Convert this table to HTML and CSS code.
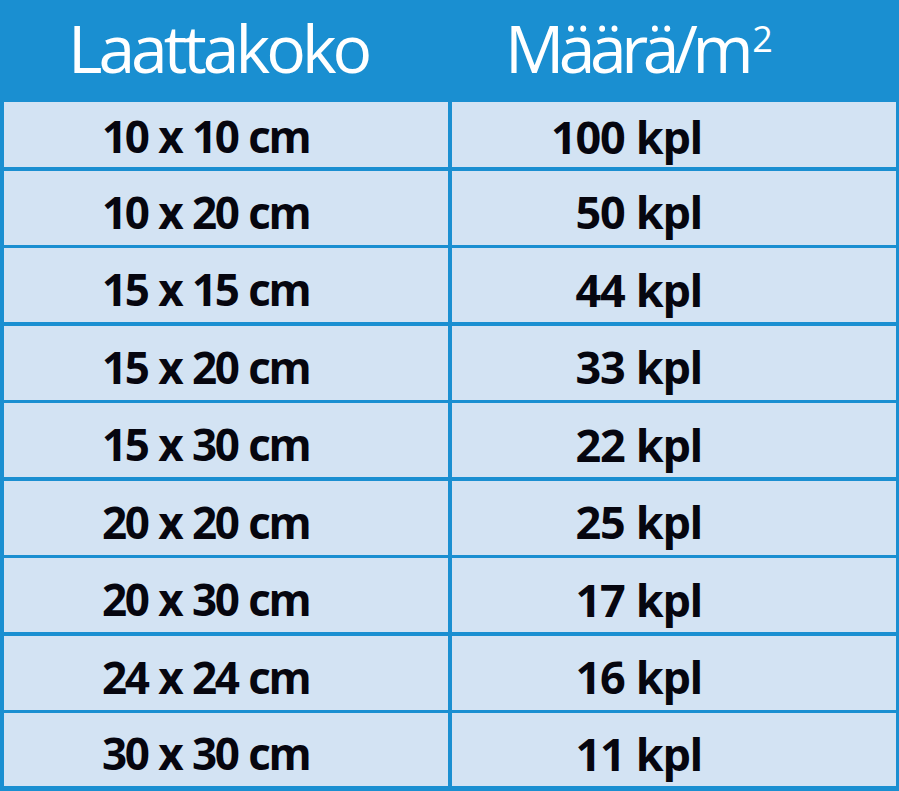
FILE: index.html
```html
<!DOCTYPE html>
<html lang="fi">
<head>
    <meta charset="UTF-8">
    <meta name="viewport" content="width=device-width, initial-scale=1.0">
    <title>Laattojen määrä neliömetrillä</title>
    <link rel="stylesheet" href="styles.css">
</head>
<body>
    <div class="tile-table">
        <div class="cell head head-size">Laattakoko</div>
        <div class="cell head head-count">Määrä/m<sup>2</sup></div>

        <div class="cell size first">10 x 10 cm</div>
        <div class="cell count first">100 kpl</div>

        <div class="cell size">10 x 20 cm</div>
        <div class="cell count">50 kpl</div>

        <div class="cell size">15 x 15 cm</div>
        <div class="cell count">44 kpl</div>

        <div class="cell size">15 x 20 cm</div>
        <div class="cell count">33 kpl</div>

        <div class="cell size">15 x 30 cm</div>
        <div class="cell count">22 kpl</div>

        <div class="cell size">20 x 20 cm</div>
        <div class="cell count">25 kpl</div>

        <div class="cell size">20 x 30 cm</div>
        <div class="cell count">17 kpl</div>

        <div class="cell size">24 x 24 cm</div>
        <div class="cell count">16 kpl</div>

        <div class="cell size">30 x 30 cm</div>
        <div class="cell count">11 kpl</div>
    </div>
</body>
</html>
```

FILE: styles.css
```css
body {
    margin: 0;
    background: #ffffff;
    font-family: 'Open Sans', 'Noto Sans', sans-serif;
}
.tile-table {
    width: 899px;
    height: 791px;
    box-sizing: border-box;
    display: grid;
    grid-template-columns: 444px 444px;
    grid-template-rows: 98.5px 65px repeat(7, 74px) 72.5px;
    column-gap: 4px;
    row-gap: 3.5px;
    padding: 0 3px 0 4px;
    background-color: #1a8fd1;
}
.cell {
    display: flex;
    align-items: center;
    background-color: #d3e3f3;
    color: #06060f;
    font-weight: 700;
    font-size: 45px;
    padding-top: 8px;
    box-sizing: border-box;
}
.cell.first {
    padding-top: 3px;
}
.size {
    font-size: 44px;
    letter-spacing: -2.5px;
    word-spacing: 2px;
    padding-left: 98px;
}
.count {
    letter-spacing: -1.3px;
    word-spacing: 1px;
    justify-content: flex-end;
    padding-right: 194px;
}
.head {
    background-color: #1a8fd1;
    color: #ffffff;
    font-weight: 400;
    font-size: 66px;
    letter-spacing: -4px;
    padding-top: 0;
    padding-bottom: 4px;
}
.head-size {
    padding-left: 64px;
}
.head-count {
    letter-spacing: -5.5px;
    padding-left: 53px;
}
.head sup {
    font-size: 36px;
    letter-spacing: 0;
    line-height: normal;
    align-self: flex-start;
    margin-top: 14px;
    margin-left: 4px;
}
```
